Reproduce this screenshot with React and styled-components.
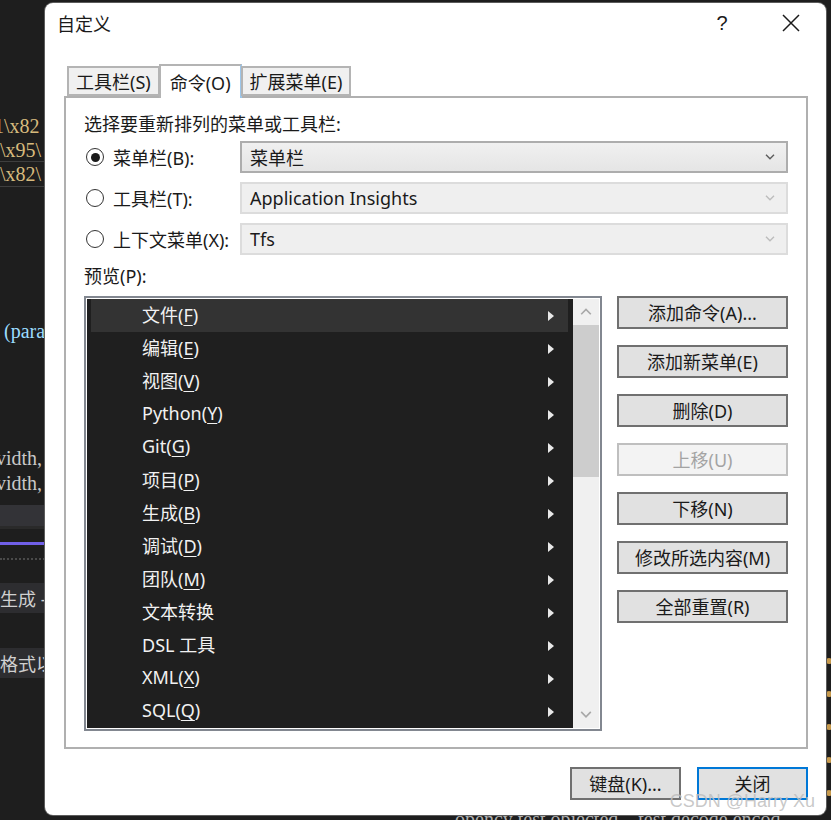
import React from 'react';
import styled, { createGlobalStyle } from 'styled-components';

const UI_FONT = `"Noto Sans", "Noto Sans CJK SC", sans-serif`;
const CODE_FONT = `"Liberation Serif", "Noto Sans CJK SC", serif`;

const GlobalStyle = createGlobalStyle`
	html, body {
		margin: 0;
		padding: 0;
		background: #1e1e1e;
		overflow: hidden;
	}
	* {
		box-sizing: border-box;
	}
`;

const menuItems = [
	{ label : '文件', key : 'F' },
	{ label : '编辑', key : 'E' },
	{ label : '视图', key : 'V' },
	{ label : 'Python', key : 'Y' },
	{ label : 'Git', key : 'G' },
	{ label : '项目', key : 'P' },
	{ label : '生成', key : 'B' },
	{ label : '调试', key : 'D' },
	{ label : '团队', key : 'M' },
	{ label : '文本转换' },
	{ label : 'DSL 工具' },
	{ label : 'XML', key : 'X' },
	{ label : 'SQL', key : 'Q' },
];

const sideButtons = [
	{ label : '添加命令(A)...' },
	{ label : '添加新菜单(E)' },
	{ label : '删除(D)' },
	{ label : '上移(U)', disabled : true },
	{ label : '下移(N)' },
	{ label : '修改所选内容(M)' },
	{ label : '全部重置(R)' },
];

const pickers = [
	{ label : '菜单栏(B):', value : '菜单栏', checked : true },
	{ label : '工具栏(T):', value : 'Application Insights' },
	{ label : '上下文菜单(X):', value : 'Tfs' },
];

// bits of the code editor that show around the dialog
const codeBits = [
	{ text : '1\\x82', x : -6, y : 114, color : '#d7ba7d' },
	{ text : '\\x95\\', x : 0, y : 138, color : '#d7ba7d' },
	{ text : '\\x82\\', x : 0, y : 162, color : '#d7ba7d' },
	{ text : '(para', x : 4, y : 319, color : '#9cdcfe' },
	{ text : 'vidth,', x : -4, y : 446, color : '#c8c8c8' },
	{ text : 'vidth,', x : -4, y : 471, color : '#c8c8c8' },
];

const Chevron = ({ up, color = '#606060', size = 10 }) => (
	<svg width={size} height={size * 0.6} viewBox="0 0 10 6">
		<path
			d={up ? 'M1 5.2 L5 1.2 L9 5.2' : 'M1 0.8 L5 4.8 L9 0.8'}
			fill="none"
			stroke={color}
			strokeWidth="1.4"
		/>
	</svg>
);

export default function App() {
	return (
		<Desktop>
			<GlobalStyle />

			<Backdrop>
				{codeBits.map((bit, i) => (
					<CodeText
						key={i}
						style={{ left : bit.x, top : bit.y, color : bit.color }}
					>
						{bit.text}
					</CodeText>
				))}
				<CurrentLine />
				<ScrollStrip />
				<AccentLine />
				<DottedLine />
				<PanelTab top={583}>生成 -</PanelTab>
				<PanelTab top={648}>格式以</PanelTab>
				<BottomCode>opency test objected&nbsp;&nbsp;&nbsp;&nbsp;test decode encod</BottomCode>
				<RightDots>
					{[0, 1, 2, 3, 4].map((i) => <Dot key={i} />)}
				</RightDots>
			</Backdrop>

			<Window>
				<TitleBar>
					<Title>自定义</Title>
					<TitleButtons>
						<HelpButton>?</HelpButton>
						<CloseButton aria-label="close">
							<svg width="18" height="18" viewBox="0 0 18 18">
								<path
									d="M1 1 L17 17 M17 1 L1 17"
									stroke="#1a1a1a"
									strokeWidth="1.5"
								/>
							</svg>
						</CloseButton>
					</TitleButtons>
				</TitleBar>

				<Body>
					<TabStrip>
						<Tab>工具栏(S)</Tab>
						<Tab active>命令(O)</Tab>
						<Tab>扩展菜单(E)</Tab>
					</TabStrip>

					<Panel>
						<Caption>选择要重新排列的菜单或工具栏:</Caption>

						<PickerGrid>
							{pickers.map((p) => (
								<React.Fragment key={p.label}>
									<RadioLabel>
										<Radio checked={p.checked} />
										{p.label}
									</RadioLabel>
									<Combo enabled={p.checked}>
										<span>{p.value}</span>
										<Chevron color={p.checked ? '#5c5c5c' : '#bcbcbc'} />
									</Combo>
								</React.Fragment>
							))}
						</PickerGrid>

						<Caption>预览(P):</Caption>

						<PreviewRow>
							<ListBox>
								<ListItems>
									{menuItems.map((item, i) => (
										<ListItem key={item.label} selected={i === 0}>
											<span>
												{item.label}
												{item.key && (
													<>
														(<u>{item.key}</u>)
													</>
												)}
											</span>
											<Arrow />
										</ListItem>
									))}
								</ListItems>
								<ScrollBar>
									<ScrollArrow>
										<Chevron up color="#a8a8a8" size={12} />
									</ScrollArrow>
									<Thumb />
									<ScrollTrack />
									<ScrollArrow>
										<Chevron color="#a8a8a8" size={12} />
									</ScrollArrow>
								</ScrollBar>
							</ListBox>

							<ButtonColumn>
								{sideButtons.map((b) => (
									<DialogButton key={b.label} disabled={b.disabled}>
										{b.label}
									</DialogButton>
								))}
							</ButtonColumn>
						</PreviewRow>
					</Panel>

					<Footer>
						<DialogButton wide>键盘(K)...</DialogButton>
						<DialogButton wide primary>关闭</DialogButton>
					</Footer>
				</Body>
				<Watermark>CSDN @Harry Xu</Watermark>
			</Window>
		</Desktop>
	);
}

const Desktop = styled.div`
	position: relative;
	width: 831px;
	height: 820px;
	overflow: hidden;
	background: #1e1e1e;
	font-family: ${UI_FONT};
	padding: 3px 0 0 45px;
`;

const Backdrop = styled.div`
	position: absolute;
	inset: 0;
	pointer-events: none;
`;

const CodeText = styled.div`
	position: absolute;
	font-family: ${CODE_FONT};
	font-size: 20px;
	line-height: 24px;
	white-space: nowrap;
`;

const CurrentLine = styled.div`
	position: absolute;
	left: 0;
	top: 161px;
	width: 50px;
	height: 26px;
	border-top: 1px solid #3e3e3e;
	border-bottom: 1px solid #3e3e3e;
`;

const ScrollStrip = styled.div`
	position: absolute;
	left: 0;
	top: 505px;
	width: 50px;
	height: 24px;
	background: #333337;
	border-bottom: 3px solid #2a2a2a;
`;

const AccentLine = styled.div`
	position: absolute;
	left: 0;
	top: 542px;
	width: 50px;
	height: 3px;
	background: #7160e8;
`;

const DottedLine = styled.div`
	position: absolute;
	left: 0;
	top: 558px;
	width: 45px;
	border-top: 2px dotted #4a4a4a;
`;

const PanelTab = styled.div`
	position: absolute;
	left: 0;
	top: ${(p) => p.top}px;
	width: 50px;
	height: 30px;
	padding-top: 2px;
	background: #2d2d30;
	color: #d0d0d0;
	font-size: 18px;
	white-space: nowrap;
	overflow: hidden;
`;

const BottomCode = styled.div`
	position: absolute;
	left: 455px;
	top: 808px;
	color: #b0b0b0;
	font-family: ${CODE_FONT};
	font-size: 20px;
	white-space: nowrap;
`;

const RightDots = styled.div`
	position: absolute;
	left: 826px;
	top: 658px;
	display: flex;
	flex-direction: column;
	gap: 27px;
`;

const Dot = styled.div`
	width: 6px;
	height: 6px;
	border-radius: 50%;
	background: #c79a4d;
`;

const Window = styled.div`
	position: relative;
	width: 781px;
	height: 812px;
	background: #ffffff;
	border-radius: 8px;
	box-shadow: 0 0 0 1px #5c5c5c;
	display: flex;
	flex-direction: column;
	color: #000;
	font-size: 18px;
`;

const TitleBar = styled.div`
	display: flex;
	align-items: center;
	justify-content: space-between;
	height: 40px;
	padding: 0 0 0 12px;
`;

const Title = styled.div`
	font-size: 18px;
	color: #1a1a1a;
`;

const TitleButtons = styled.div`
	display: flex;
	align-items: center;
	height: 100%;
`;

const HelpButton = styled.div`
	width: 70px;
	text-align: center;
	font-size: 20px;
	font-family: "Liberation Sans", sans-serif;
	color: #1a1a1a;
	padding-right: 22px;
`;

const CloseButton = styled.div`
	display: flex;
	align-items: center;
	justify-content: center;
	width: 58px;
	height: 100%;
	padding-right: 12px;
`;

const Body = styled.div`
	flex: 1;
	display: flex;
	flex-direction: column;
	padding: 21px 18px 15px 19px;
`;

const TabStrip = styled.div`
	display: flex;
	align-items: flex-end;
	height: 34px;
	margin-bottom: -2px;
	padding-left: 3px;
	position: relative;
	z-index: 1;
`;

const Tab = styled.div`
	display: flex;
	align-items: center;
	justify-content: center;
	height: ${(p) => (p.active ? '34px' : '30px')};
	padding: 0 ${(p) => (p.active ? '9px' : '7px')};
	margin-bottom: ${(p) => (p.active ? '0' : '2px')};
	background: ${(p) => (p.active ? '#ffffff' : '#f0f0f0')};
	border: 2px solid #b4b4b4;
	border-bottom: ${(p) => (p.active ? 'none' : '2px solid #b4b4b4')};
	border-right-color: ${(p) => (p.active ? '#9cc6ea' : '#b4b4b4')};
	margin-right: -1px;
	font-size: 18px;
	white-space: nowrap;
	color: #1a1a1a;
`;

const Panel = styled.div`
	height: 653px;
	border: 2px solid #b0b0b0;
	display: flex;
	flex-direction: column;
	padding: 13px 18px 18px 18px;
`;

const Caption = styled.div`
	height: 26px;
	line-height: 26px;
	color: #1a1a1a;
	white-space: nowrap;
`;

const PickerGrid = styled.div`
	display: grid;
	grid-template-columns: 156px 1fr;
	grid-auto-rows: 32px;
	row-gap: 9px;
	margin: 4px 0 8px 0;
`;

const RadioLabel = styled.label`
	display: flex;
	align-items: center;
	gap: 9px;
	padding-left: 2px;
	white-space: nowrap;
	color: #1a1a1a;
`;

const Radio = styled.span`
	position: relative;
	width: 18px;
	height: 18px;
	border-radius: 50%;
	border: 1.5px solid #333;
	background: #fff;
	flex-shrink: 0;

	&::after {
		content: '';
		position: absolute;
		inset: 3.5px;
		border-radius: 50%;
		background: ${(p) => (p.checked ? '#1a1a1a' : 'transparent')};
	}
`;

const Combo = styled.div`
	display: flex;
	align-items: center;
	justify-content: space-between;
	padding: 0 11px 0 8px;
	border: 2px solid ${(p) => (p.enabled ? '#adadad' : '#dcdcdc')};
	background: ${(p) =>
		p.enabled ? 'linear-gradient(#f0f0f0, #e5e5e5)' : '#efefef'};
	color: #1a1a1a;
	white-space: nowrap;
`;

const PreviewRow = styled.div`
	flex: 1;
	display: flex;
	gap: 15px;
	margin-top: 7px;
`;

const ListBox = styled.div`
	width: 518px;
	display: flex;
	border: 2px solid #828790;
	outline: 1px solid #ffffff;
	outline-offset: -3px;
	padding: 1px;
	background: #ffffff;
`;

const ListItems = styled.div`
	flex: 1;
	background: #1f1f1f;
	padding: 0 5px 0 4px;
	display: flex;
	flex-direction: column;
`;

const ListItem = styled.div`
	display: flex;
	align-items: center;
	justify-content: space-between;
	height: 33px;
	padding: 0 14px 3px 51px;
	background: ${(p) => (p.selected ? '#333333' : 'transparent')};
	color: #f1f1f1;
	font-size: 18px;
	white-space: nowrap;

	u {
		text-decoration: underline;
		text-underline-offset: 3px;
		text-decoration-thickness: 1px;
	}
`;

const Arrow = styled.span`
	width: 0;
	height: 0;
	margin-top: 3px;
	border-top: 5px solid transparent;
	border-bottom: 5px solid transparent;
	border-left: 6px solid #e8e8e8;
`;

const ScrollBar = styled.div`
	width: 26px;
	display: flex;
	flex-direction: column;
	background: #f0f0f0;
`;

const ScrollArrow = styled.div`
	height: 26px;
	display: flex;
	align-items: center;
	justify-content: center;
`;

const Thumb = styled.div`
	height: 152px;
	background: #cdcdcd;
`;

const ScrollTrack = styled.div`
	flex: 1;
`;

const ButtonColumn = styled.div`
	display: flex;
	flex-direction: column;
	gap: 16px;
	width: 171px;
`;

const DialogButton = styled.div`
	display: flex;
	align-items: center;
	justify-content: center;
	height: 33px;
	padding-bottom: 1px;
	width: ${(p) => (p.wide ? '111px' : '100%')};
	border: 2px solid
		${(p) =>
		p.primary ? '#0078d7' : p.disabled ? '#bfbfbf' : '#707070'};
	background: ${(p) => (p.disabled ? '#f3f3f3' : '#e1e1e1')};
	color: ${(p) => (p.disabled ? '#a3a3a3' : '#1a1a1a')};
	font-size: 18px;
	white-space: nowrap;
`;

const Footer = styled.div`
	display: flex;
	justify-content: flex-end;
	gap: 16px;
	margin-top: auto;
`;

const Watermark = styled.div`
	position: absolute;
	right: 11px;
	bottom: 3px;
	font-family: "Liberation Sans", sans-serif;
	font-size: 18px;
	color: rgba(190, 190, 190, 0.85);
	pointer-events: none;
`;
